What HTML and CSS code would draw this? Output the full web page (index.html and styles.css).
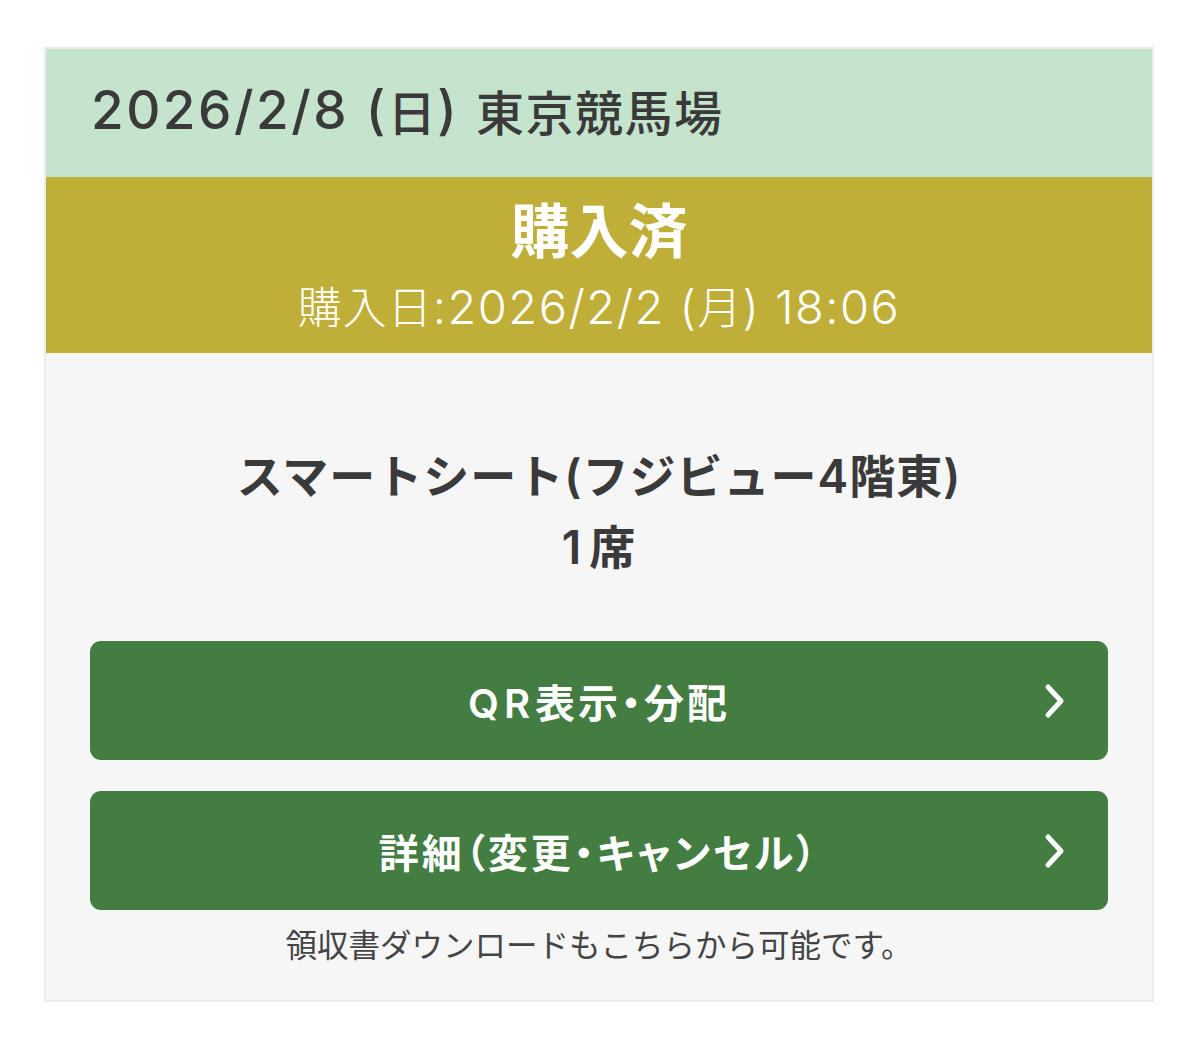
FILE: index.html
```html
<!DOCTYPE html>
<html lang="ja">
<head>
<meta charset="utf-8">
<link rel="stylesheet" href="styles.css">
</head>
<body>
<div class="card">
  <div class="event"><span class="lat">2026/2/8 (</span>日<span class="lat">) </span>東京競馬場</div>
  <div class="status">
    <div class="status-title">購入済</div>
    <div class="status-date">購入日<span class="lat">:2026/2/2 (</span>月<span class="lat">) 18:06</span></div>
  </div>
  <div class="content">
    <div class="seat">
      <div class="seat-name">スマートシート<span class="lat">(</span>フジビュー<span class="lat">4</span>階東<span class="lat">)</span></div>
      <div class="seat-count"><span class="lat">1</span>席</div>
    </div>
    <a class="btn" href="#"><span><span class="lat">QR</span>表示・分配</span><svg class="chev" viewBox="0 0 24 40" width="24" height="40"><path d="M6 6 L19 20 L6 34" fill="none" stroke="#fff" stroke-width="5" stroke-linecap="round" stroke-linejoin="round"/></svg></a>
    <a class="btn" href="#"><span>詳細（変更・キャンセル）</span><svg class="chev" viewBox="0 0 24 40" width="24" height="40"><path d="M6 6 L19 20 L6 34" fill="none" stroke="#fff" stroke-width="5" stroke-linecap="round" stroke-linejoin="round"/></svg></a>
    <div class="note">領収書ダウンロードもこちらから可能です。</div>
  </div>
</div>
</body>
</html>
```
FILE: styles.css
```css
html, body {
  margin: 0;
  padding: 0;
  background: #ffffff;
}
body {
  font-family: "Noto Sans CJK JP", "Noto Sans", sans-serif;
  color: #3b3b3b;
}
.lat {
  font-family: "Inter", "Liberation Sans", "Noto Sans CJK JP", sans-serif;
  line-height: 1;
}
.card {
  margin: 47px 0 0 44px;
  width: 1106px;
  border: 2px solid #ebebeb;
  background: #f6f6f6;
}
.event {
  height: 128px;
  box-sizing: border-box;
  padding: 0 0 6px 45px;
  background: #c5e4cd;
  display: flex;
  align-items: center;
  white-space: pre;
  font-size: 48px;
  font-weight: 500;
  color: #3a3a3a;
  letter-spacing: 1.5px;
}
.event .lat {
  font-size: 53px;
  letter-spacing: 2.5px;
}
.status {
  height: 176px;
  background: #bfae37;
  color: #ffffff;
  display: flex;
  flex-direction: column;
  align-items: center;
  justify-content: center;
}
.status-title {
  font-size: 59px;
  font-weight: 700;
  line-height: 76px;
  margin-top: -5px;
}
.status-date {
  margin-top: 9px;
  font-size: 44px;
  font-weight: 300;
  line-height: 60px;
  white-space: pre;
  letter-spacing: 1px;
}
.status-date .lat {
  font-size: 47px;
  font-weight: 300;
  letter-spacing: 1.5px;
}
.content {
  padding: 85px 44px 36px 44px;
  display: flex;
  flex-direction: column;
}
.seat {
  text-align: center;
  font-size: 46px;
  font-weight: 700;
  line-height: 71px;
  color: #3a3a3a;
  letter-spacing: 1px;
  margin-bottom: 61px;
}
.seat .lat {
  font-weight: 600;
}
.seat-count .lat {
  letter-spacing: 8px;
}
.btn {
  position: relative;
  display: flex;
  align-items: center;
  justify-content: center;
  height: 119px;
  background: #437d41;
  border-radius: 11px;
  color: #ffffff;
  text-decoration: none;
  font-size: 40px;
  font-weight: 700;
  letter-spacing: 3px;
  font-feature-settings: "palt";
  margin-bottom: 31px;
}
.btn .lat {
  letter-spacing: 5px;
  font-weight: 600;
}
.btn + .btn {
  margin-bottom: 12px;
}
.chev {
  position: absolute;
  right: 42px;
  top: 50%;
  transform: translateY(-50%);
}
.note {
  text-align: center;
  font-size: 31.5px;
  font-weight: 400;
  color: #444444;
  line-height: 42px;
}
```
